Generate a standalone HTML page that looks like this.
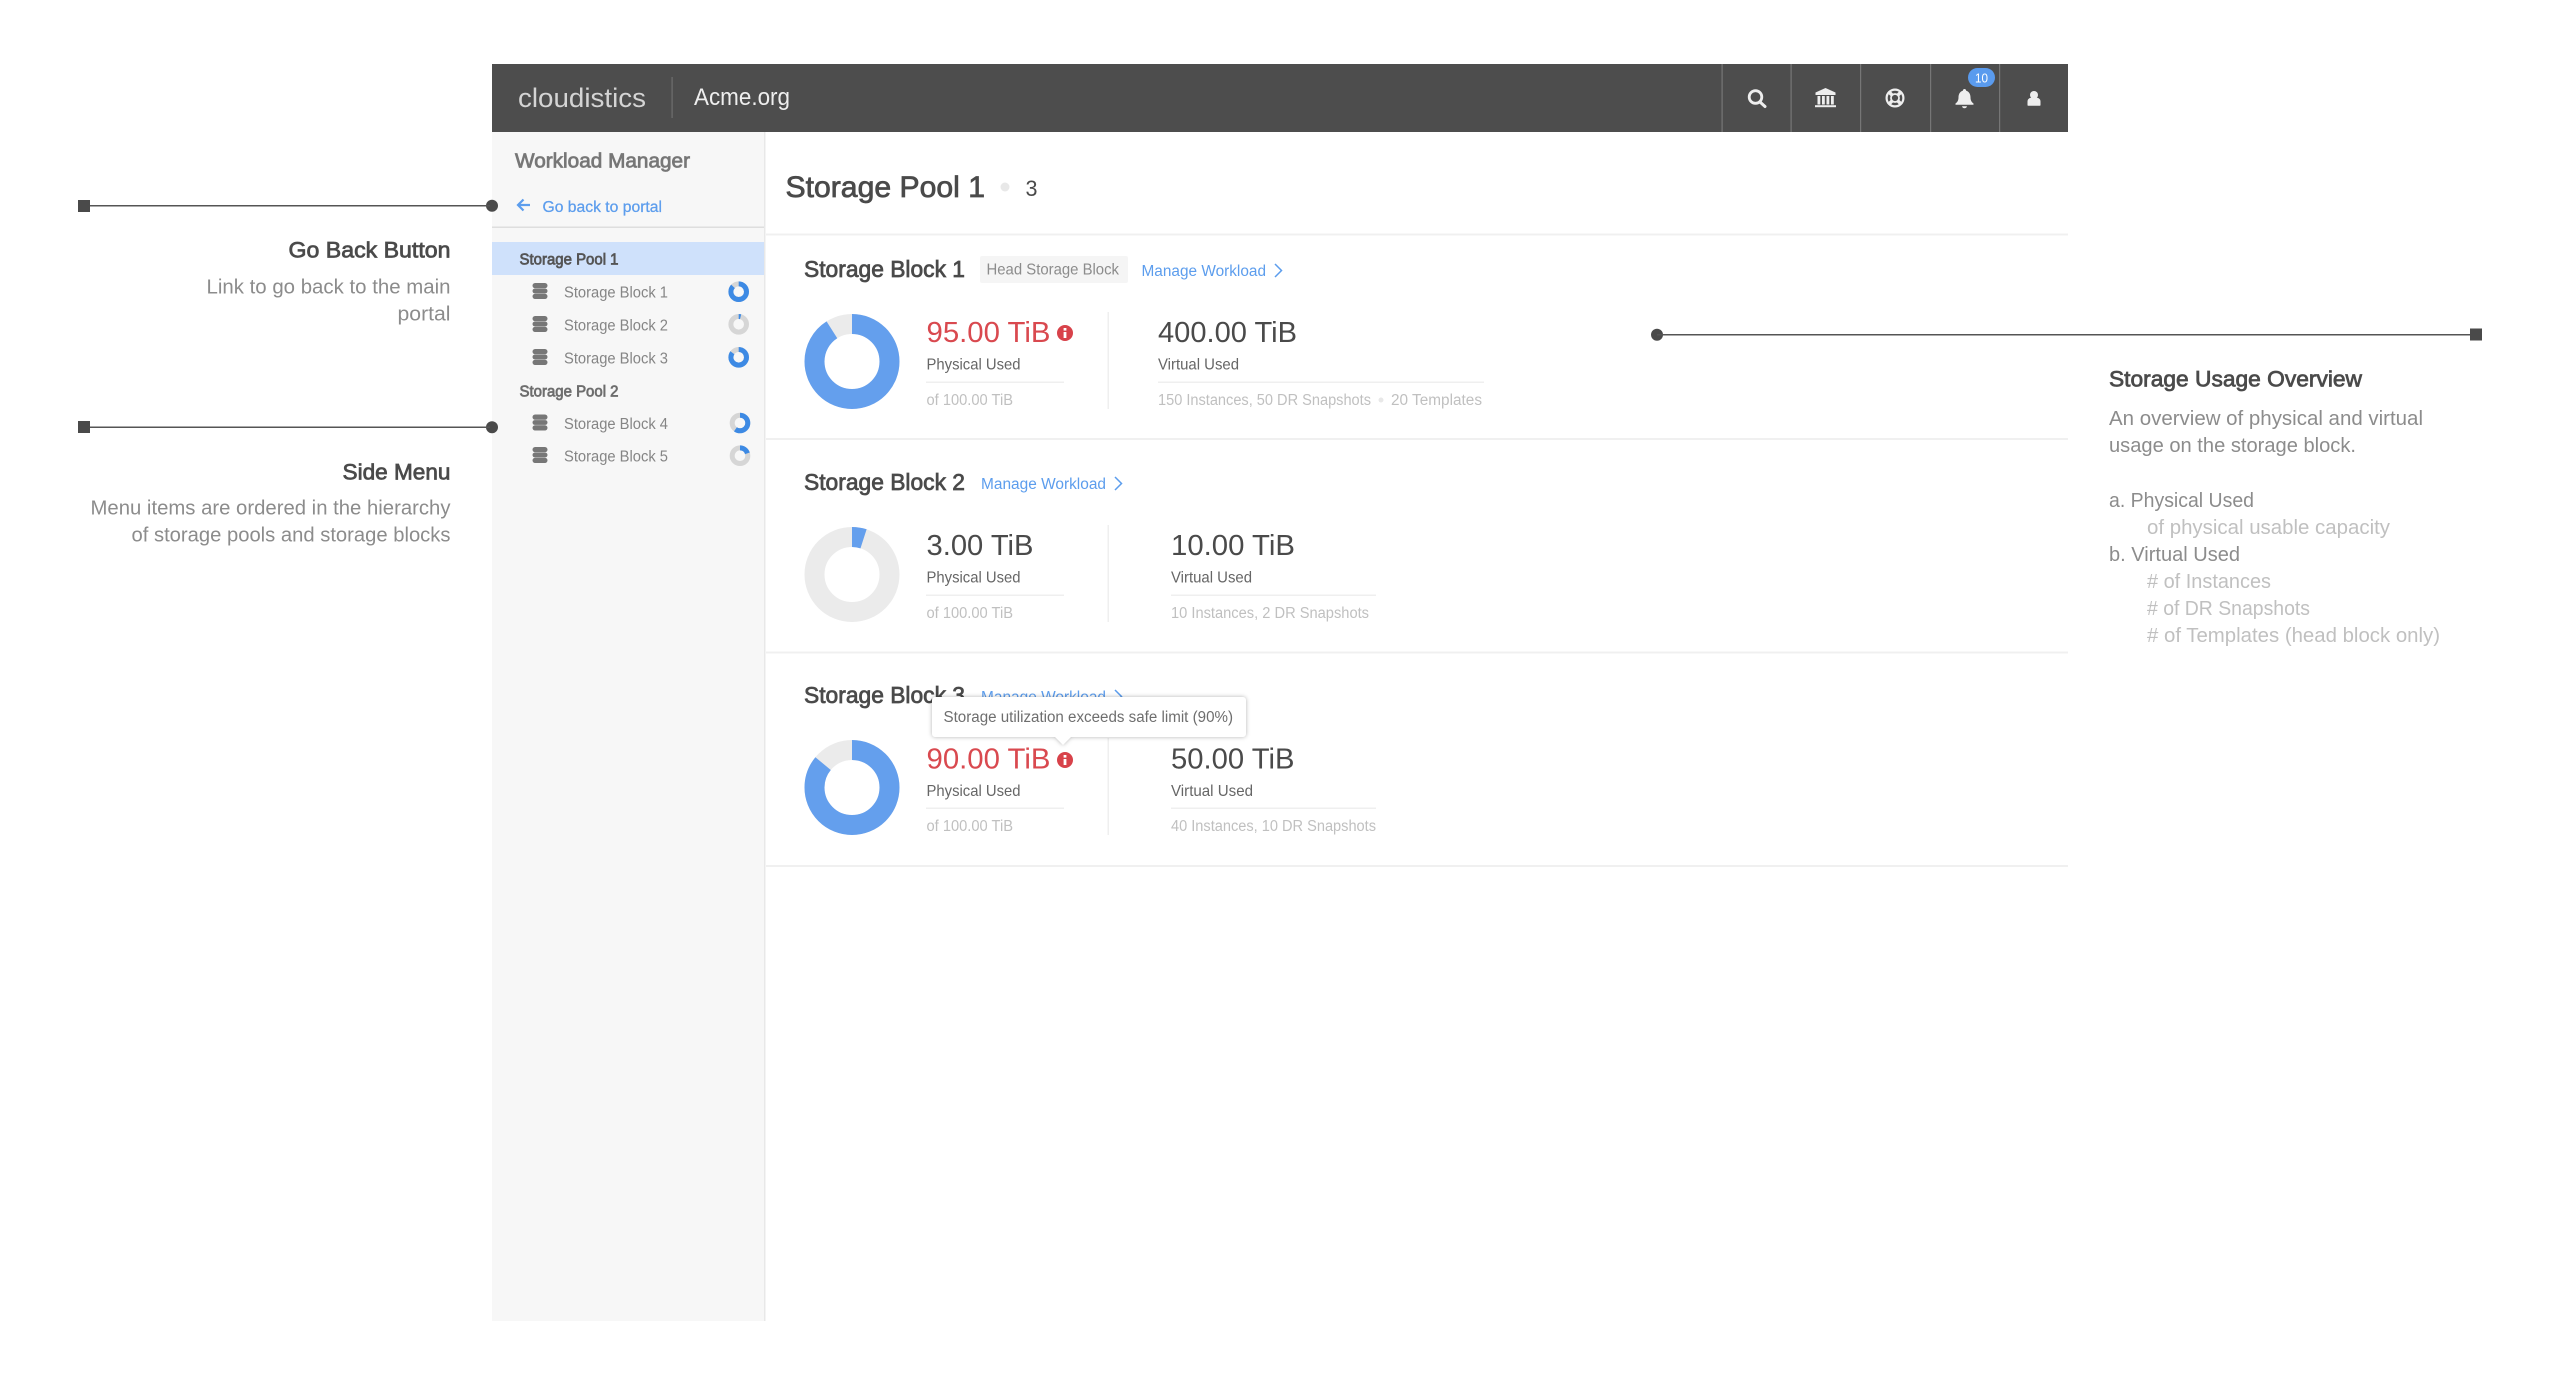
<!DOCTYPE html>
<html><head><meta charset="utf-8"><title>Storage Pool</title>
<style>
html,body{margin:0;padding:0;background:#fff;width:2560px;height:1386px;overflow:hidden}
svg{display:block}
text{font-family:"Liberation Sans",sans-serif;white-space:pre}
.semi{stroke-width:.75px}
</style></head><body>
<svg width="2560" height="1386" viewBox="0 0 2560 1386" xmlns="http://www.w3.org/2000/svg">
<rect width="2560" height="1386" fill="#fff"/>
<!-- sidebar -->
<rect x="492" y="132" width="272" height="1189" fill="#f7f7f7"/>
<rect x="764" y="132" width="1.5" height="1189" fill="#e8e8e8"/>
<!-- header -->
<rect x="492" y="64" width="1576" height="68" fill="#4d4d4d"/>
<rect x="671.5" y="77" width="1.2" height="41" fill="#6e6e6e"/>
<text x="518" y="107" font-size="27" fill="#d4d4d4" textLength="128" lengthAdjust="spacingAndGlyphs">cloudistics</text>
<text x="694" y="105" font-size="24" fill="#eeeeee" textLength="96" lengthAdjust="spacingAndGlyphs">Acme.org</text>
<g fill="#767676">
<rect x="1721.5" y="64" width="1.2" height="68"/><rect x="1790.5" y="64" width="1.2" height="68"/><rect x="1860" y="64" width="1.2" height="68"/><rect x="1930" y="64" width="1.2" height="68"/><rect x="1999" y="64" width="1.2" height="68"/>
</g>
<!-- search -->
<circle cx="1755.5" cy="97" r="6.3" fill="none" stroke="#eee" stroke-width="2.8"/>
<path d="M1760 102L1765 106.500" stroke="#eee" stroke-width="3" stroke-linecap="round"/>
<!-- bank -->
<path d="M1825.5 88L1815.500 92.500V95H1835.500V92.500Z" fill="#eee"/>
<g fill="#eee"><rect x="1817.5" y="96" width="2.8" height="8.500"/><rect x="1822" y="96" width="2.800" height="8.500"/><rect x="1826.500" y="96" width="2.800" height="8.500"/><rect x="1831" y="96" width="2.800" height="8.500"/><rect x="1815" y="105.200" width="21" height="2"/></g>
<!-- lifesaver -->
<circle cx="1895" cy="98" r="8.400" fill="none" stroke="#eee" stroke-width="2.200"/>
<circle cx="1895" cy="98" r="4" fill="none" stroke="#eee" stroke-width="1.800"/>
<path d="M1889 92L1892 95M1901 92L1898 95M1889 104L1892 101M1901 104L1898 101" stroke="#eee" stroke-width="3.400"/>
<!-- bell -->
<path d="M1964.500 89c-1 0-1.600.7-1.600 1.600c-3 1-4.400 3.600-4.400 6.600c0 3.400-1.300 5-3 6.300v1.300h18v-1.300c-1.700-1.300-3-2.900-3-6.300c0-3-1.400-5.600-4.400-6.600c0-.9-.6-1.600-1.600-1.600z" fill="#eee"/>
<path d="M1962 106.200h5c-.3 1.300-1.200 2-2.500 2s-2.200-.7-2.500-2z" fill="#eee"/>
<!-- badge -->
<rect x="1968" y="68" width="27" height="19" rx="9.500" fill="#5a9bee"/>
<text x="1975" y="82.500" font-size="13" fill="#fff" textLength="13" lengthAdjust="spacingAndGlyphs">10</text>
<!-- user -->
<circle cx="2034" cy="95" r="4" fill="#eee"/>
<path d="M2027.500 105v-3.500c0-2.500 2-3.800 4-3.800h5c2 0 4 1.300 4 3.800V105c0 .5-.4 .8-1 .8h-11c-.6 0-1-.3-1-.8z" fill="#eee"/>

<!-- sidebar content -->
<text class="semi" x="515" y="167.500" font-size="20" fill="#777" stroke="#777" textLength="175" lengthAdjust="spacingAndGlyphs">Workload Manager</text>
<path d="M530 205H518M523.500 199.500L518 205L523.500 210.500" fill="none" stroke="#5c9ded" stroke-width="2.200"/>
<text x="542.500" y="212" font-size="15.500" fill="#5c9ded" stroke="#5c9ded" style="stroke-width:.25px" textLength="119.500" lengthAdjust="spacingAndGlyphs">Go back to portal</text>
<rect x="492" y="226.500" width="272" height="1.500" fill="#dedede"/>
<rect x="492" y="242" width="272" height="33" fill="#cfe1fb"/>
<text class="semi" x="519.500" y="264.500" font-size="15.500" fill="#555" stroke="#555" textLength="99" lengthAdjust="spacingAndGlyphs">Storage Pool 1</text>
<text class="semi" x="519.500" y="396.500" font-size="15.500" fill="#6e6e6e" stroke="#6e6e6e" textLength="99" lengthAdjust="spacingAndGlyphs">Storage Pool 2</text>
<g font-size="15.500" fill="#858585">
<text x="564" y="297.500" textLength="104" lengthAdjust="spacingAndGlyphs">Storage Block 1</text>
<text x="564" y="330.500" textLength="104" lengthAdjust="spacingAndGlyphs">Storage Block 2</text>
<text x="564" y="363.500" textLength="104" lengthAdjust="spacingAndGlyphs">Storage Block 3</text>
<text x="564" y="429" textLength="104" lengthAdjust="spacingAndGlyphs">Storage Block 4</text>
<text x="564" y="461.500" textLength="104" lengthAdjust="spacingAndGlyphs">Storage Block 5</text>
</g>
<!-- db icons -->
<g fill="#777">
<g transform="translate(532.500,283)"><rect width="15" height="5.200" rx="2.600"/><rect y="5.600" width="15" height="4.800" rx="2.400"/><rect y="10.800" width="15" height="5.200" rx="2.600"/></g>
<g transform="translate(532.500,316)"><rect width="15" height="5.200" rx="2.600"/><rect y="5.600" width="15" height="4.800" rx="2.400"/><rect y="10.800" width="15" height="5.200" rx="2.600"/></g>
<g transform="translate(532.500,349)"><rect width="15" height="5.200" rx="2.600"/><rect y="5.600" width="15" height="4.800" rx="2.400"/><rect y="10.800" width="15" height="5.200" rx="2.600"/></g>
<g transform="translate(532.500,414.500)"><rect width="15" height="5.200" rx="2.600"/><rect y="5.600" width="15" height="4.800" rx="2.400"/><rect y="10.800" width="15" height="5.200" rx="2.600"/></g>
<g transform="translate(532.500,447)"><rect width="15" height="5.200" rx="2.600"/><rect y="5.600" width="15" height="4.800" rx="2.400"/><rect y="10.800" width="15" height="5.200" rx="2.600"/></g>
</g>
<!-- small donuts -->
<g fill="none" stroke-width="5">
<circle cx="738.700" cy="291.700" r="7.800" stroke="#d6d6d6"/><circle cx="738.700" cy="291.700" r="7.800" stroke="#3d8ae4" pathLength="100" stroke-dasharray="87 100" transform="rotate(-90 738.700 291.700)"/>
<circle cx="738.700" cy="324.300" r="7.800" stroke="#d6d6d6"/><circle cx="738.700" cy="324.300" r="7.800" stroke="#3d8ae4" pathLength="100" stroke-dasharray="4 100" transform="rotate(-90 738.700 324.300)"/>
<circle cx="738.700" cy="357.300" r="7.800" stroke="#d6d6d6"/><circle cx="738.700" cy="357.300" r="7.800" stroke="#3d8ae4" pathLength="100" stroke-dasharray="85 100" transform="rotate(-90 738.700 357.300)"/>
<circle cx="740" cy="423" r="7.800" stroke="#d6d6d6"/><circle cx="740" cy="423" r="7.800" stroke="#3d8ae4" pathLength="100" stroke-dasharray="60 100" transform="rotate(-90 740 423)"/>
<circle cx="740" cy="455.700" r="7.800" stroke="#d6d6d6"/><circle cx="740" cy="455.700" r="7.800" stroke="#3d8ae4" pathLength="100" stroke-dasharray="20 100" transform="rotate(-90 740 455.700)"/>
</g>

<!-- main title -->
<text class="semi" x="785.500" y="197" font-size="29.500" fill="#4a4a4a" stroke="#4a4a4a" textLength="199.500" lengthAdjust="spacingAndGlyphs">Storage Pool 1</text>
<circle cx="1005" cy="187" r="4.500" fill="#e8e8e8"/>
<text x="1025.500" y="196" font-size="22" fill="#4a4a4a" textLength="12" lengthAdjust="spacingAndGlyphs">3</text>
<g fill="#f0f0f0">
<rect x="766" y="233.500" width="1302" height="2"/>
<rect x="766" y="438" width="1302" height="2"/>
<rect x="766" y="651.500" width="1302" height="2"/>
<rect x="766" y="865" width="1302" height="2"/>
</g>

<!-- Block 1 -->
<text class="semi" x="804" y="277" font-size="23" fill="#4a4a4a" stroke="#4a4a4a" textLength="161" lengthAdjust="spacingAndGlyphs">Storage Block 1</text>
<rect x="980" y="256" width="148" height="27" rx="2" fill="#f5f5f5"/>
<text x="986.500" y="274.500" font-size="16" fill="#8c8c8c" textLength="132.500" lengthAdjust="spacingAndGlyphs">Head Storage Block</text>
<text x="1141.500" y="276" font-size="15.500" fill="#5c9ded" textLength="124.500" lengthAdjust="spacingAndGlyphs">Manage Workload</text>
<path d="M1275 264L1281.500 270.500L1275 277" fill="none" stroke="#5c9ded" stroke-width="1.500"/>
<g fill="none" stroke-width="20">
<circle cx="852" cy="361.500" r="37.500" stroke="#ebebeb"/>
<circle cx="852" cy="361.500" r="37.500" stroke="#649fed" pathLength="100" stroke-dasharray="91 100" transform="rotate(-90 852 361.500)"/>
</g>
<text x="926.500" y="342" font-size="28.500" fill="#d9494f" textLength="124" lengthAdjust="spacingAndGlyphs">95.00 TiB</text>
<circle cx="1065" cy="333" r="8" fill="#d8424a"/>
<rect x="1063.600" y="332" width="2.800" height="6" fill="#fff"/><rect x="1063.600" y="328" width="2.800" height="2.600" fill="#fff"/>
<text x="926.500" y="369.500" font-size="16" fill="#666" textLength="94" lengthAdjust="spacingAndGlyphs">Physical Used</text>
<rect x="926" y="381.500" width="138" height="1.500" fill="#efefef"/>
<text x="926.500" y="405" font-size="15.500" fill="#c0c0c0" textLength="86.500" lengthAdjust="spacingAndGlyphs">of 100.00 TiB</text>
<rect x="1107.500" y="312" width="1.500" height="97" fill="#efefef"/>
<text x="1158" y="342" font-size="28.500" fill="#4a4a4a" textLength="139" lengthAdjust="spacingAndGlyphs">400.00 TiB</text>
<text x="1158" y="369.500" font-size="16" fill="#666" textLength="81" lengthAdjust="spacingAndGlyphs">Virtual Used</text>
<rect x="1158" y="381.500" width="326" height="1.500" fill="#efefef"/>
<text x="1158" y="405" font-size="15.500" fill="#c0c0c0" textLength="213" lengthAdjust="spacingAndGlyphs">150 Instances, 50 DR Snapshots</text>
<circle cx="1381" cy="400" r="2.500" fill="#e8e8e8"/>
<text x="1391" y="405" font-size="15.500" fill="#c0c0c0" textLength="91" lengthAdjust="spacingAndGlyphs">20 Templates</text>

<!-- Block 2 -->
<text class="semi" x="804" y="490" font-size="23" fill="#4a4a4a" stroke="#4a4a4a" textLength="161" lengthAdjust="spacingAndGlyphs">Storage Block 2</text>
<text x="981" y="489" font-size="15.500" fill="#5c9ded" textLength="125" lengthAdjust="spacingAndGlyphs">Manage Workload</text>
<path d="M1115 477L1121.500 483.500L1115 490" fill="none" stroke="#5c9ded" stroke-width="1.500"/>
<g fill="none" stroke-width="20">
<circle cx="852" cy="574.500" r="37.500" stroke="#ebebeb"/>
<circle cx="852" cy="574.500" r="37.500" stroke="#649fed" pathLength="100" stroke-dasharray="5 100" transform="rotate(-90 852 574.500)"/>
</g>
<text x="926.500" y="555" font-size="28.500" fill="#4a4a4a" textLength="107" lengthAdjust="spacingAndGlyphs">3.00 TiB</text>
<text x="926.500" y="582.500" font-size="16" fill="#666" textLength="94" lengthAdjust="spacingAndGlyphs">Physical Used</text>
<rect x="926" y="594.500" width="138" height="1.500" fill="#efefef"/>
<text x="926.500" y="618" font-size="15.500" fill="#c0c0c0" textLength="86.500" lengthAdjust="spacingAndGlyphs">of 100.00 TiB</text>
<rect x="1107.500" y="525" width="1.500" height="97" fill="#efefef"/>
<text x="1171" y="555" font-size="28.500" fill="#4a4a4a" textLength="124" lengthAdjust="spacingAndGlyphs">10.00 TiB</text>
<text x="1171" y="582.500" font-size="16" fill="#666" textLength="81" lengthAdjust="spacingAndGlyphs">Virtual Used</text>
<rect x="1171" y="594.500" width="205" height="1.500" fill="#efefef"/>
<text x="1171" y="618" font-size="15.500" fill="#c0c0c0" textLength="198" lengthAdjust="spacingAndGlyphs">10 Instances, 2 DR Snapshots</text>

<!-- Block 3 -->
<text class="semi" x="804" y="703" font-size="23" fill="#4a4a4a" stroke="#4a4a4a" textLength="161" lengthAdjust="spacingAndGlyphs">Storage Block 3</text>
<text x="981" y="702" font-size="15.500" fill="#5c9ded" textLength="125" lengthAdjust="spacingAndGlyphs">Manage Workload</text>
<path d="M1115 690L1121.500 696.500L1115 703" fill="none" stroke="#5c9ded" stroke-width="1.500"/>
<g fill="none" stroke-width="20">
<circle cx="852" cy="787.500" r="37.500" stroke="#ebebeb"/>
<circle cx="852" cy="787.500" r="37.500" stroke="#649fed" pathLength="100" stroke-dasharray="86 100" transform="rotate(-90 852 787.500)"/>
</g>
<text x="926.500" y="768.500" font-size="28.500" fill="#d9494f" textLength="124" lengthAdjust="spacingAndGlyphs">90.00 TiB</text>
<circle cx="1065" cy="760" r="8" fill="#d8424a"/>
<rect x="1063.600" y="759" width="2.800" height="6" fill="#fff"/><rect x="1063.600" y="755" width="2.800" height="2.600" fill="#fff"/>
<text x="926.500" y="796" font-size="16" fill="#666" textLength="94" lengthAdjust="spacingAndGlyphs">Physical Used</text>
<rect x="926" y="807.500" width="138" height="1.500" fill="#efefef"/>
<text x="926.500" y="831" font-size="15.500" fill="#c0c0c0" textLength="86.500" lengthAdjust="spacingAndGlyphs">of 100.00 TiB</text>
<rect x="1107.500" y="738" width="1.500" height="97" fill="#efefef"/>
<text x="1171" y="768.500" font-size="28.500" fill="#4a4a4a" textLength="123.500" lengthAdjust="spacingAndGlyphs">50.00 TiB</text>
<text x="1171" y="796" font-size="16" fill="#666" textLength="82" lengthAdjust="spacingAndGlyphs">Virtual Used</text>
<rect x="1171" y="807.500" width="205" height="1.500" fill="#efefef"/>
<text x="1171" y="831" font-size="15.500" fill="#c0c0c0" textLength="205" lengthAdjust="spacingAndGlyphs">40 Instances, 10 DR Snapshots</text>

<!-- tooltip -->
<g style="filter:drop-shadow(0 0 2px rgba(0,0,0,.3))">
<path d="M935 697H1243a3 3 0 0 1 3 3V734a3 3 0 0 1-3 3H1071L1063 745L1055 737H935a3 3 0 0 1-3-3V700a3 3 0 0 1 3-3Z" fill="#fff"/>
</g>
<text x="943.500" y="722" font-size="15.500" fill="#6e6e6e" textLength="289.500" lengthAdjust="spacingAndGlyphs">Storage utilization exceeds safe limit (90%)</text>

<!-- left annotations -->
<g fill="#4a4a4a">
<rect x="78" y="200" width="12" height="12"/><circle cx="492" cy="205.700" r="6"/>
<rect x="78" y="421" width="12" height="12"/><circle cx="492" cy="427.300" r="6"/>
</g>
<rect x="90" y="205" width="400" height="1.500" fill="#555"/>
<rect x="90" y="426.500" width="400" height="1.500" fill="#555"/>
<text class="semi" x="288.500" y="257.500" font-size="22.500" fill="#4a4a4a" stroke="#4a4a4a" textLength="162" lengthAdjust="spacingAndGlyphs">Go Back Button</text>
<text x="206.500" y="293.500" font-size="20.500" fill="#8c8c8c" textLength="244" lengthAdjust="spacingAndGlyphs">Link to go back to the main</text>
<text x="397.500" y="320.500" font-size="20.500" fill="#8c8c8c" textLength="53" lengthAdjust="spacingAndGlyphs">portal</text>
<text class="semi" x="342.500" y="479.500" font-size="22.500" fill="#4a4a4a" stroke="#4a4a4a" textLength="108" lengthAdjust="spacingAndGlyphs">Side Menu</text>
<text x="90.500" y="514.500" font-size="20.500" fill="#8c8c8c" textLength="360" lengthAdjust="spacingAndGlyphs">Menu items are ordered in the hierarchy</text>
<text x="131.500" y="541.500" font-size="20.500" fill="#8c8c8c" textLength="319" lengthAdjust="spacingAndGlyphs">of storage pools and storage blocks</text>

<!-- right annotation -->
<circle cx="1657" cy="334.700" r="6" fill="#4a4a4a"/>
<rect x="1657" y="334" width="815" height="1.500" fill="#555"/>
<rect x="2470" y="328.500" width="12" height="12" fill="#4a4a4a"/>
<text class="semi" x="2109" y="386.500" font-size="22.500" fill="#4a4a4a" stroke="#4a4a4a" textLength="253" lengthAdjust="spacingAndGlyphs">Storage Usage Overview</text>
<text x="2109" y="425" font-size="20.500" fill="#8c8c8c" textLength="314" lengthAdjust="spacingAndGlyphs">An overview of physical and virtual</text>
<text x="2109" y="452" font-size="20.500" fill="#8c8c8c" textLength="247" lengthAdjust="spacingAndGlyphs">usage on the storage block.</text>
<text x="2109" y="507" font-size="20.500" fill="#8c8c8c" textLength="145" lengthAdjust="spacingAndGlyphs">a. Physical Used</text>
<text x="2147" y="534" font-size="20.500" fill="#c0c0c0" textLength="243" lengthAdjust="spacingAndGlyphs">of physical usable capacity</text>
<text x="2109" y="561" font-size="20.500" fill="#8c8c8c" textLength="131" lengthAdjust="spacingAndGlyphs">b. Virtual Used</text>
<text x="2147" y="588" font-size="20.500" fill="#c0c0c0" textLength="124" lengthAdjust="spacingAndGlyphs"># of Instances</text>
<text x="2147" y="615" font-size="20.500" fill="#c0c0c0" textLength="163" lengthAdjust="spacingAndGlyphs"># of DR Snapshots</text>
<text x="2147" y="642" font-size="20.500" fill="#c0c0c0" textLength="293" lengthAdjust="spacingAndGlyphs"># of Templates (head block only)</text>
</svg>
</body></html>
